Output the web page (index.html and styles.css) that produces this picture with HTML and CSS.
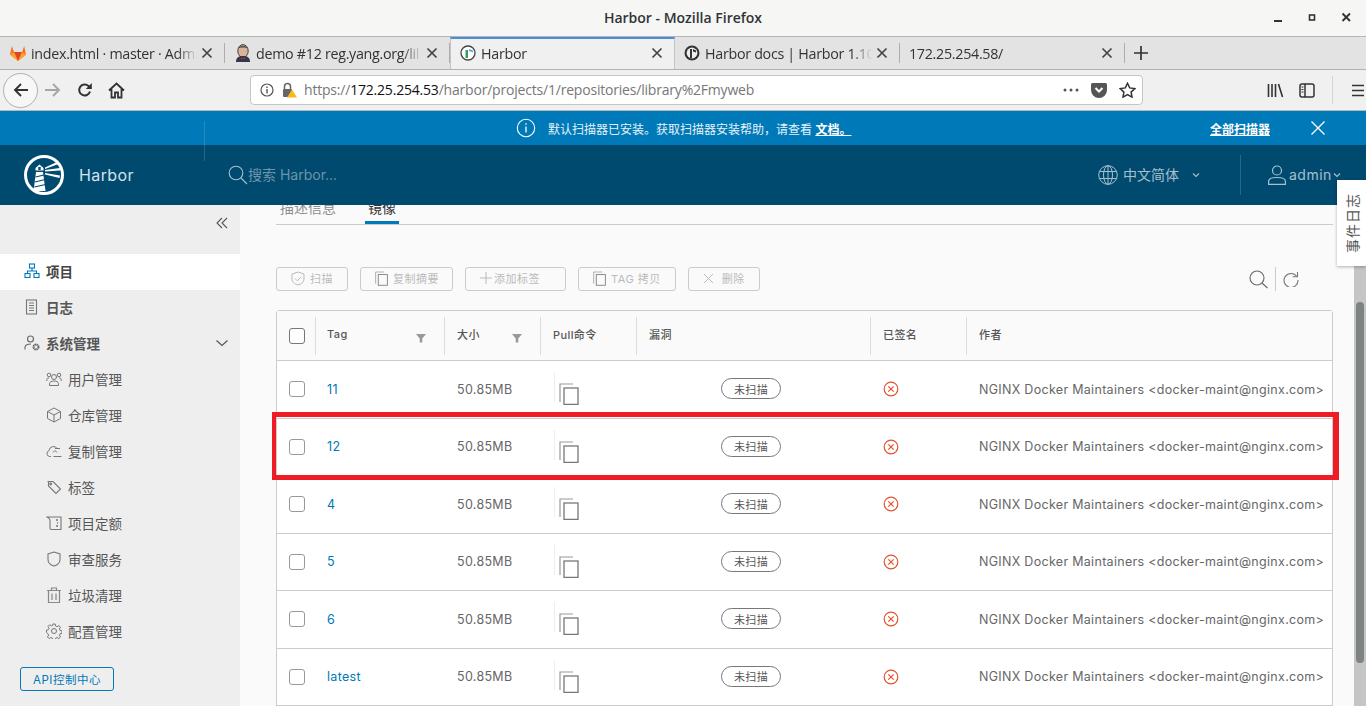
FILE: index.html
```html
<!DOCTYPE html>
<html lang="en">
<head>
    <meta charset="UTF-8">
    <title>Harbor - Mozilla Firefox</title>
    <link rel="stylesheet" href="styles.css">
</head>
<body>

<svg class="sprites" width="0" height="0">
    <symbol id="i-copy" viewBox="0 0 20 22">
        <path d="M1 19V1h13" fill="none" stroke="#9a9a9a" stroke-width="1.2"/>
        <rect x="5" y="5" width="14" height="16.4" fill="none" stroke="#777" stroke-width="1.3"/>
    </symbol>
    <symbol id="i-fail" viewBox="0 0 16 16">
        <circle cx="8" cy="8" r="6.8" fill="none" stroke="#e1532f" stroke-width="1.2"/>
        <path d="M5.3 5.3l5.4 5.4M10.7 5.3l-5.4 5.4" stroke="#e1532f" stroke-width="1.2"/>
    </symbol>
    <symbol id="i-funnel" viewBox="0 0 10 10">
        <path d="M0 1h10L6.3 5.4V9.5H3.7V5.4z" fill="#999"/>
    </symbol>
    <symbol id="i-close" viewBox="0 0 12 12">
        <path d="M1.5 1.5l9 9M10.5 1.5l-9 9" stroke="currentColor" stroke-width="1.7" fill="none"/>
    </symbol>
</svg>

<!-- Window title -->
<div class="titlebar">
    <span class="title-text">Harbor - Mozilla Firefox</span>
    <div class="win-controls">
        <svg width="12" height="12" viewBox="0 0 12 12"><rect x="1" y="8" width="8" height="2" fill="#333"/></svg>
        <svg width="12" height="12" viewBox="0 0 12 12"><rect x="2.5" y="3" width="5" height="5" fill="none" stroke="#333" stroke-width="1.6"/></svg>
        <svg width="12" height="12" viewBox="0 0 12 12"><path d="M1.5 1.5l7.5 7.5M9 1.5l-7.5 7.5" stroke="#333" stroke-width="1.9"/></svg>
    </div>
</div>

<!-- Tabs -->
<div class="tabbar">
    <div class="tab">
        <svg class="favicon" width="18" height="18" viewBox="0 0 18 18">
            <path d="M9 17L1 10.5 2.8 2 5 8h8l2.2-6L17 10.5z" fill="#fc6d26"/>
            <path d="M9 17L5 8h8z" fill="#e24329"/>
            <path d="M1 10.5L5 8l4 9zM17 10.5L13 8l-4 9z" fill="#fca326"/>
        </svg>
        <span class="tab-label">index.html · master · Adm</span>
        <svg class="tab-x"><use href="#i-close"/></svg>
    </div>
    <div class="tab">
        <svg class="favicon" width="18" height="18" viewBox="0 0 18 18">
            <ellipse cx="9" cy="7" rx="5.2" ry="6.4" fill="#d8b49a" stroke="#443" stroke-width="1"/>
            <path d="M4 4.5C5 .8 13 .8 14 4.5 11 3 7 3 4 4.5z" fill="#555"/>
            <path d="M2 18c0-5 3-6 7-6s7 1 7 6z" fill="#33384a"/>
            <path d="M7 13l2 1.4L11 13v2.6l-2-1.2-2 1.2z" fill="#b33"/>
        </svg>
        <span class="tab-label">demo #12 reg.yang.org/lil</span>
        <svg class="tab-x"><use href="#i-close"/></svg>
    </div>
    <div class="tab active">
        <svg class="favicon small" width="16" height="16" viewBox="0 0 16 16">
            <circle cx="8" cy="8" r="7" fill="#fff" stroke="#444" stroke-width="1.3"/>
            <path d="M5.5 5h2.5v8H5.5z" fill="#3c9a5f"/>
            <path d="M9 4l4 1.5v2L9 6z" fill="#59a9d8"/>
        </svg>
        <span class="tab-label">Harbor</span>
        <svg class="tab-x"><use href="#i-close"/></svg>
    </div>
    <div class="tab">
        <svg class="favicon small" width="16" height="16" viewBox="0 0 16 16">
            <circle cx="8" cy="8" r="7.5" fill="#333"/>
            <circle cx="8" cy="8" r="5.4" fill="#eee"/>
            <path d="M6 4h2v9H6zM9 4l3 1.5v2L9 6.5z" fill="#333"/>
        </svg>
        <span class="tab-label">Harbor docs | Harbor 1.10</span>
        <svg class="tab-x"><use href="#i-close"/></svg>
    </div>
    <div class="tab">
        <span class="tab-label">172.25.254.58/</span>
        <svg class="tab-x"><use href="#i-close"/></svg>
    </div>
    <svg class="tab-new" width="16" height="16" viewBox="0 0 16 16"><path d="M8 1v14M1 8h14" stroke="#333" stroke-width="1.7"/></svg>
</div>

<!-- Navigation toolbar -->
<div class="toolbar">
    <div class="back-btn">
        <svg width="18" height="18" viewBox="0 0 18 18"><path d="M16 9H3M9 3L3 9l6 6" fill="none" stroke="#333" stroke-width="1.9"/></svg>
    </div>
    <svg class="nav-icon" width="18" height="18" viewBox="0 0 18 18"><path d="M1 9h14M9 3l6 6-6 6" fill="none" stroke="#a6a6a6" stroke-width="1.9"/></svg>
    <svg class="nav-icon" width="16" height="16" viewBox="0 0 16 16"><path d="M13 9.5A5.5 5.5 0 1 1 11.5 4L14 5.6" fill="none" stroke="#333" stroke-width="2"/><path d="M14.8 1v6h-6z" fill="#333"/></svg>
    <svg class="nav-icon" width="17" height="17" viewBox="0 0 17 17"><path d="M1 8.5L8.5 1.5l7.5 7M3.5 7v8.5h3.5v-5h3v5h3.5V7" fill="none" stroke="#333" stroke-width="1.8"/></svg>

    <div class="urlbar">
        <svg class="url-info" width="14" height="14" viewBox="0 0 14 14"><circle cx="7" cy="7" r="6" fill="none" stroke="#555" stroke-width="1.2"/><path d="M7 6v4.5M7 3.4v1.5" stroke="#555" stroke-width="1.4"/></svg>
        <svg class="url-lock" width="16" height="16" viewBox="0 0 16 16">
            <path d="M3.5 7V4.5a3 3 0 0 1 6 0V7" fill="none" stroke="#666" stroke-width="1.5"/>
            <rect x="2" y="7" width="9" height="8" rx="1" fill="#666"/>
            <path d="M11 7.5L16 15.5H6z" fill="#fbb81a"/>
        </svg>
        <span class="url-text">https://<b>172.25.254.53</b>/harbor/projects/1/repositories/library%2Fmyweb</span>
        <div class="url-actions">
            <svg width="16" height="4" viewBox="0 0 16 4"><circle cx="2" cy="2" r="1.5" fill="#555"/><circle cx="8" cy="2" r="1.5" fill="#555"/><circle cx="14" cy="2" r="1.5" fill="#555"/></svg>
            <svg width="16" height="15" viewBox="0 0 16 15"><path d="M1.5 0h13A1.5 1.5 0 0 1 16 1.5V7A8 8 0 0 1 0 7V1.5A1.5 1.5 0 0 1 1.5 0z" fill="#555"/><path d="M4.5 5L8 8.5 11.5 5" fill="none" stroke="#fff" stroke-width="2"/></svg>
            <svg width="17" height="16" viewBox="0 0 17 16"><path d="M8.5 1.3l2.2 4.6 5 .7-3.6 3.5.9 5-4.5-2.4L4 15.1l.9-5L1.3 6.6l5-.7z" fill="none" stroke="#333" stroke-width="1.5"/></svg>
        </div>
    </div>

    <div class="tool-right">
        <svg width="17" height="15" viewBox="0 0 17 15"><path d="M1.5 1v13M5 1v13M8.5 1v13M11.5 1l4 13" stroke="#333" stroke-width="1.6" fill="none"/></svg>
        <svg width="16" height="15" viewBox="0 0 16 15"><rect x="1" y="1" width="14" height="13" rx="2" fill="none" stroke="#333" stroke-width="1.5"/><path d="M6 1v13" stroke="#333" stroke-width="1.5"/><path d="M2.5 4h2M2.5 6.5h2M2.5 9h2" stroke="#333"/></svg>
        <span class="tool-sep"></span>
        <svg width="14" height="13" viewBox="0 0 14 13"><path d="M1 1.5h12M1 6.5h12M1 11.5h12" stroke="#333" stroke-width="1.5"/></svg>
    </div>
</div>

<!-- Scanner notice -->
<div class="banner">
    <svg class="banner-icon" width="20" height="20" viewBox="0 0 20 20"><circle cx="10" cy="10" r="8.7" fill="none" stroke="#fff" stroke-width="1.1"/><path d="M10 8.5v6M10 5.2v1.6" stroke="#fff" stroke-width="1.3"/></svg>
    <span class="banner-text">默认扫描器已安装。获取扫描器安装帮助，请查看 <a class="banner-link">文档。</a></span>
    <a class="banner-all">全部扫描器</a>
    <svg class="banner-close" width="16" height="16" viewBox="0 0 16 16"><path d="M1.5 1.5l13 13M14.5 1.5l-13 13" stroke="#fff" stroke-width="1.3"/></svg>
</div>

<!-- Harbor header -->
<header class="app-header">
    <svg class="logo" width="40" height="40" viewBox="0 0 40 40">
        <circle cx="20" cy="20" r="18.5" fill="#004a70" stroke="#fff" stroke-width="3"/>
        <path d="M9.5 36l2.5-19h7l2.5 19z" fill="#fff"/>
        <path d="M11.5 15.5V13l4-3.500 4 3.500v2.500z" fill="#fff"/>
        <path d="M14.3 12h2.400v3h-2.400z" fill="#004a70"/>
        <path d="M11.5 22l8.500-2M11 27l10-2.500M10.5 32l11-2.500" stroke="#004a70" stroke-width="1.2"/>
        <path d="M21 12.5L33 7l1.500 2L21 14zM21 15l15-2v2.500L21 16.500zM21 18l15 2.500-.5 2.500L21 19.500z" fill="#fff"/>
    </svg>
    <span class="brand">Harbor</span>
    <div class="search">
        <svg width="20" height="20" viewBox="0 0 20 20"><circle cx="8" cy="8" r="6.8" fill="none" stroke="#a7c0cd" stroke-width="1.1"/><path d="M13 13l6 6" stroke="#a7c0cd" stroke-width="1.1"/></svg>
        <span>搜索 Harbor...</span>
    </div>
    <div class="lang">
        <svg width="20" height="20" viewBox="0 0 20 20" fill="none" stroke="#a7c0cd" stroke-width="1"><circle cx="10" cy="10" r="9.3"/><ellipse cx="10" cy="10" rx="4.5" ry="9.3"/><path d="M10 .7v18.6M1.5 6.5h17M1.5 13.5h17"/></svg>
        <span>中文简体</span>
        <svg class="caret" width="8" height="6" viewBox="0 0 8 6"><path d="M1 1.5l3 3 3-3" fill="none" stroke="#a7c0cd" stroke-width="1.1"/></svg>
    </div>
    <div class="user">
        <svg width="18" height="20" viewBox="0 0 18 20" fill="none" stroke="#a7c0cd" stroke-width="1.2"><circle cx="9" cy="5.5" r="4.5"/><path d="M.6 19.4v-3.200C.6 13.5 5 12.5 9 12.5s8.400 1 8.400 3.700v3.200z"/></svg>
        <span>admin</span>
        <svg class="caret" width="8" height="6" viewBox="0 0 8 6"><path d="M1 1.5l3 3 3-3" fill="none" stroke="#a7c0cd" stroke-width="1.1"/></svg>
    </div>
</header>

<div class="app-body">
    <!-- Left navigation -->
    <aside class="sidebar">
        <div class="collapse">
            <svg width="12" height="12" viewBox="0 0 12 12"><path d="M6 1L1 6l5 5M11 1L6 6l5 5" fill="none" stroke="#555" stroke-width="1.1"/></svg>
        </div>
        <a class="nav-item top active">
            <svg width="16" height="16" viewBox="0 0 16 16" fill="none" stroke="#0079b8" stroke-width="1.1"><rect x="5.5" y="1" width="5" height="4"/><rect x="1" y="10.5" width="5" height="4"/><rect x="10" y="10.5" width="5" height="4"/><path d="M8 5v3M3.5 10.5V8h9v2.500"/></svg>
            项目
        </a>
        <a class="nav-item top">
            <svg width="16" height="16" viewBox="0 0 16 16" fill="none" stroke="#777" stroke-width="1.1"><rect x="2.5" y="1" width="10" height="14"/><path d="M5 4h5M5 6.5h5M5 9h5M5 11.5h5"/></svg>
            日志
        </a>
        <a class="nav-item top">
            <svg width="16" height="16" viewBox="0 0 16 16" fill="none" stroke="#666" stroke-width="1.1"><circle cx="6.5" cy="4" r="3"/><path d="M1 14.5v-2C1 10 4 9 7 9"/><circle cx="12" cy="12" r="2.5" stroke-width="2" stroke-dasharray="1.5 .5"/></svg>
            系统管理
            <svg class="nav-chevron" width="14" height="8" viewBox="0 0 14 8"><path d="M1.5 1.5L7 6.5l5.500-5" fill="none" stroke="#555" stroke-width="1.2"/></svg>
        </a>
        <a class="nav-item sub">
            <svg width="16" height="16" viewBox="0 0 16 16" fill="none" stroke="#777" stroke-width="1"><circle cx="8" cy="6" r="2.5"/><path d="M3.5 14.5v-2c0-1.500 2-2.500 4.500-2.500s4.500 1 4.500 2.500v2z"/><circle cx="3" cy="4" r="1.8"/><circle cx="13" cy="4" r="1.8"/><path d="M.8 10V8.500C.8 7.500 1.500 7 3 7M15.200 10V8.500C15.200 7.500 14.500 7 13 7"/></svg>
            用户管理
        </a>
        <a class="nav-item sub">
            <svg width="16" height="16" viewBox="0 0 16 16" fill="none" stroke="#777" stroke-width="1"><path d="M8 1l6.500 3.500v7L8 15l-6.500-3.500v-7zM1.500 4.500L8 8l6.500-3.500M8 8v7"/></svg>
            仓库管理
        </a>
        <a class="nav-item sub">
            <svg width="16" height="16" viewBox="0 0 16 16" fill="none" stroke="#777" stroke-width="1"><path d="M5 13.500H3.500a3 3 0 0 1-.5-5.800 4.500 4.500 0 0 1 8.500-1.700M15.500 13.500h-8M9 5.500h5M7 9.500l2-2 2 2"/></svg>
            复制管理
        </a>
        <a class="nav-item sub">
            <svg width="16" height="16" viewBox="0 0 16 16" fill="none" stroke="#777" stroke-width="1.1"><path d="M1.500 2.500h5.500l7.500 7.500-4.500 4.500L2.500 7V2.500z"/><circle cx="4.7" cy="5" r=".9"/></svg>
            标签
        </a>
        <a class="nav-item sub">
            <svg width="16" height="16" viewBox="0 0 16 16" fill="none" stroke="#777" stroke-width="1.1"><path d="M1 2h14v12.500H5.500c-1 0-1.500-.5-1.500-1.500V5C4 3.500 2.500 3 1 2z"/><path d="M10 5h2M11 8h1M10 11h2" stroke-width="1.3"/></svg>
            项目定额
        </a>
        <a class="nav-item sub">
            <svg width="16" height="16" viewBox="0 0 16 16" fill="none" stroke="#777" stroke-width="1.1"><path d="M8 1l6 2v5.500c0 3-2.500 5.500-6 6.500-3.500-1-6-3.500-6-6.500V3z"/></svg>
            审查服务
        </a>
        <a class="nav-item sub">
            <svg width="16" height="16" viewBox="0 0 16 16" fill="none" stroke="#888" stroke-width="1.2"><path d="M1 3.500h14M5.500 3.500V1h5v2.500M2.500 3.500v12h11v-12M6 6.500v6.500M10 6.500v6.500"/></svg>
            垃圾清理
        </a>
        <a class="nav-item sub">
            <svg width="16" height="16" viewBox="0 0 16 16" fill="none" stroke="#777" stroke-width="1"><circle cx="8" cy="8" r="2.5"/><path d="M6.800 1h2.400l.4 2 1.500.7 1.800-1.100 1.600 1.600-1.100 1.800.7 1.500 1.900.4v2.400l-1.900.4-.7 1.500 1.100 1.800-1.600 1.600-1.800-1.100-1.500.7-.4 1.800H6.800l-.4-1.800-1.500-.7-1.800 1.100-1.600-1.600 1.100-1.800-.7-1.500L.5 9.500V7.100l1.900-.4.7-1.500-1.100-1.800 1.600-1.600 1.800 1.100 1.500-.7z"/></svg>
            配置管理
        </a>
        <a class="api-btn">API控制中心</a>
    </aside>

    <!-- Repository tags -->
    <main class="content">
        <div class="page">
            <nav class="subnav">
                <span class="subnav-item">描述信息</span>
                <span class="subnav-item current">镜像</span>
            </nav>

            <div class="actions">
                <button class="act">
                    <svg width="14" height="15" viewBox="0 0 14 15" fill="none" stroke="#bbb" stroke-width="1"><path d="M7 1l6 2v5c0 3-2.500 5-6 6-3.500-1-6-3-6-6V3z"/><path d="M4 7.500l2.300 2.300L10 6"/></svg>
                    扫描
                </button>
                <button class="act narrow">
                    <svg class="act-copy"><use href="#i-copy"/></svg>
                    复制摘要
                </button>
                <button class="act add">
                    <svg width="12" height="12" viewBox="0 0 12 12"><path d="M6 0v12M0 6h12" stroke="#bbb" stroke-width="1"/></svg>
                    添加标签
                </button>
                <button class="act">
                    <svg class="act-copy"><use href="#i-copy"/></svg>
                    TAG 拷贝
                </button>
                <button class="act remove">
                    <svg width="11" height="11" viewBox="0 0 11 11"><path d="M1 1l9 9M10 1l-9 9" stroke="#bbb"/></svg>
                    删除
                </button>
                <div class="act-tools">
                    <svg width="19" height="19" viewBox="0 0 19 19" fill="none" stroke="#666" stroke-width="1.1"><circle cx="8" cy="8" r="7"/><path d="M13 13l5.500 5"/></svg>
                    <span class="act-sep"></span>
                    <svg width="16" height="16" viewBox="0 0 16 16" fill="none" stroke="#777" stroke-width="1.1"><path d="M13.800 5.500A7 7 0 1 0 15 9"/><path d="M14.500 1v4.800H9.700"/></svg>
                </div>
            </div>

            <div class="grid-table">
                <div class="row head">
                    <div class="cell check"><span class="box dark"></span></div>
                    <div class="cell">Tag<svg class="funnel"><use href="#i-funnel"/></svg></div>
                    <div class="cell">大小<svg class="funnel"><use href="#i-funnel"/></svg></div>
                    <div class="cell">Pull命令</div>
                    <div class="cell">漏洞</div>
                    <div class="cell">已签名</div>
                    <div class="cell">作者</div>
                </div>

                <div class="row">
                    <div class="cell check"><span class="box"></span></div>
                    <div class="cell"><a class="tag-link">11</a></div>
                    <div class="cell">50.85MB</div>
                    <div class="cell pull"><svg class="copy-icon"><use href="#i-copy"/></svg></div>
                    <div class="cell vuln"><span class="chip">未扫描</span></div>
                    <div class="cell"><svg class="fail"><use href="#i-fail"/></svg></div>
                    <div class="cell">NGINX Docker Maintainers &lt;docker-maint@nginx.com&gt;</div>
                </div>
                <div class="row">
                    <div class="cell check"><span class="box"></span></div>
                    <div class="cell"><a class="tag-link">12</a></div>
                    <div class="cell">50.85MB</div>
                    <div class="cell pull"><svg class="copy-icon"><use href="#i-copy"/></svg></div>
                    <div class="cell vuln"><span class="chip">未扫描</span></div>
                    <div class="cell"><svg class="fail"><use href="#i-fail"/></svg></div>
                    <div class="cell">NGINX Docker Maintainers &lt;docker-maint@nginx.com&gt;</div>
                </div>
                <div class="row">
                    <div class="cell check"><span class="box"></span></div>
                    <div class="cell"><a class="tag-link">4</a></div>
                    <div class="cell">50.85MB</div>
                    <div class="cell pull"><svg class="copy-icon"><use href="#i-copy"/></svg></div>
                    <div class="cell vuln"><span class="chip">未扫描</span></div>
                    <div class="cell"><svg class="fail"><use href="#i-fail"/></svg></div>
                    <div class="cell">NGINX Docker Maintainers &lt;docker-maint@nginx.com&gt;</div>
                </div>
                <div class="row">
                    <div class="cell check"><span class="box"></span></div>
                    <div class="cell"><a class="tag-link">5</a></div>
                    <div class="cell">50.85MB</div>
                    <div class="cell pull"><svg class="copy-icon"><use href="#i-copy"/></svg></div>
                    <div class="cell vuln"><span class="chip">未扫描</span></div>
                    <div class="cell"><svg class="fail"><use href="#i-fail"/></svg></div>
                    <div class="cell">NGINX Docker Maintainers &lt;docker-maint@nginx.com&gt;</div>
                </div>
                <div class="row">
                    <div class="cell check"><span class="box"></span></div>
                    <div class="cell"><a class="tag-link">6</a></div>
                    <div class="cell">50.85MB</div>
                    <div class="cell pull"><svg class="copy-icon"><use href="#i-copy"/></svg></div>
                    <div class="cell vuln"><span class="chip">未扫描</span></div>
                    <div class="cell"><svg class="fail"><use href="#i-fail"/></svg></div>
                    <div class="cell">NGINX Docker Maintainers &lt;docker-maint@nginx.com&gt;</div>
                </div>
                <div class="row">
                    <div class="cell check"><span class="box"></span></div>
                    <div class="cell"><a class="tag-link">latest</a></div>
                    <div class="cell">50.85MB</div>
                    <div class="cell pull"><svg class="copy-icon"><use href="#i-copy"/></svg></div>
                    <div class="cell vuln"><span class="chip">未扫描</span></div>
                    <div class="cell"><svg class="fail"><use href="#i-fail"/></svg></div>
                    <div class="cell">NGINX Docker Maintainers &lt;docker-maint@nginx.com&gt;</div>
                </div>
            </div>
        </div>
        <div class="scrollbar"><div class="scroll-thumb"></div></div>
    </main>
</div>

<!-- Things drawn over the page -->
<span class="header-rule"></span>
<div class="event-tab"><span>事件日志</span></div>
<div class="red-box"></div>

</body>
</html>
```

FILE: styles.css
```css
* {
    box-sizing: border-box;
    margin: 0;
    padding: 0;
}

body {
    width: 1366px;
    height: 706px;
    overflow: hidden;
    display: flex;
    flex-direction: column;
    position: relative;
    font-family: Inter, "Noto Sans CJK SC", sans-serif;
    background-color: #fafafa;
    color: #565656;
}

.sprites {
    position: absolute;
}

/* Browser chrome */
.titlebar {
    height: 37px;
    flex: none;
    display: flex;
    align-items: center;
    justify-content: center;
    padding-bottom: 2px;
    position: relative;
    background-color: #f6f6f5;
    border-bottom: 1px solid #b5b5b3;
    font-family: "Open Sans", sans-serif;
}

.title-text {
    font-size: 14px;
    font-weight: 600;
    color: #2e3436;
}

.win-controls {
    position: absolute;
    right: 13px;
    top: 12px;
    display: flex;
    gap: 22px;
}

.tabbar {
    height: 33px;
    flex: none;
    display: flex;
    align-items: center;
    background-color: #e3e3e3;
    border-bottom: 1px solid #b1b1b1;
    font-family: "Open Sans", sans-serif;
}

.tab {
    width: 225px;
    height: 32px;
    flex: none;
    display: flex;
    align-items: center;
    padding: 0 12px 0 9px;
    position: relative;
    font-size: 14.3px;
    color: #333;
}

.tab::after {
    content: "";
    position: absolute;
    right: 0;
    top: 6px;
    height: 20px;
    width: 1px;
    background-color: #adadad;
}

.tab.active {
    background-color: #f0f0f0;
    border-top: 2px solid #4a90d9;
    border-left: 1px solid #c4c4c4;
    border-right: 1px solid #c4c4c4;
    padding: 0 11px 2px 9px;
}

.tab.active::after {
    display: none;
}

.favicon {
    flex: none;
    margin-right: 4px;
}

.favicon.small {
    margin-right: 5px;
}

.tab-label {
    flex: 1;
    overflow: hidden;
    white-space: nowrap;
    letter-spacing: -0.3px;
    margin-right: 4px;
    -webkit-mask-image: linear-gradient(to right, #000 88%, transparent);
    mask-image: linear-gradient(to right, #000 88%, transparent);
}

.tab-x {
    flex: none;
    width: 12px;
    height: 12px;
    color: #444;
}

.tab-new {
    margin-left: 8px;
}

.toolbar {
    height: 41px;
    flex: none;
    display: flex;
    align-items: center;
    padding-left: 3px;
    background-color: #f0f0f0;
    border-bottom: 1px solid #b8b8b8;
    font-family: "Open Sans", sans-serif;
}

.back-btn {
    width: 35px;
    height: 35px;
    flex: none;
    display: flex;
    align-items: center;
    justify-content: center;
    border: 1px solid #b0b0b0;
    border-radius: 50%;
    background-color: #f7f7f7;
    margin-right: 6px;
}

.nav-icon {
    flex: none;
    margin-right: 15px;
}

.nav-icon:last-of-type {
    margin-right: 0;
}

.urlbar {
    width: 893px;
    height: 30px;
    flex: none;
    display: flex;
    align-items: center;
    margin-left: 125px;
    padding: 0 6px 0 9px;
    background-color: #fff;
    border: 1px solid #c6c6c6;
    border-radius: 4px;
    font-size: 14px;
    color: #777;
}

.url-info {
    flex: none;
    margin-right: 7px;
}

.url-lock {
    flex: none;
    margin-right: 7px;
}

.url-text {
    flex: 1;
    white-space: nowrap;
    letter-spacing: -0.2px;
    margin-top: -2px;
}

.url-text b {
    font-weight: 400;
    color: #111;
}

.url-actions {
    display: flex;
    align-items: center;
    gap: 12px;
}

.tool-right {
    display: flex;
    align-items: center;
    margin-left: 124px;
    gap: 15px;
}

.tool-sep {
    width: 1px;
    height: 28px;
    background-color: #d4d4d4;
    margin: 0 3px 0 2px;
}

/* Harbor top */
.banner {
    height: 34px;
    flex: none;
    display: flex;
    align-items: center;
    padding-left: 516px;
    position: relative;
    background-color: #0079b8;
    color: #fff;
    font-size: 12px;
}

.banner-icon {
    flex: none;
    margin-right: 12px;
}

.banner-text {
    color: #e6f2f8;
    white-space: nowrap;
}

.banner-link,
.banner-all {
    font-weight: 700;
    color: #fff;
    text-decoration: underline;
}

.banner-all {
    position: absolute;
    left: 1210px;
}

.banner-close {
    position: absolute;
    left: 1310px;
}

.app-header {
    height: 60px;
    flex: none;
    display: flex;
    align-items: center;
    padding-left: 24px;
    background-color: #004a70;
    color: #a7c0cd;
}

.logo {
    flex: none;
}

.brand {
    width: 149px;
    margin-left: 15px;
    font-size: 16px;
    color: #d4e2ea;
    letter-spacing: 0.4px;
}

.search {
    width: 870px;
    display: flex;
    align-items: center;
    font-size: 14px;
    color: #6d94a8;
}

.search span {
    margin-top: -2px;
}

.lang,
.user {
    display: flex;
    align-items: center;
    font-size: 14px;
}

.lang span,
.user span {
    margin-top: -2px;
}

.lang {
    width: 143px;
    gap: 5px;
    height: 40px;
    border-right: 1px solid #2a6685;
}

.lang .caret {
    margin-left: 8px;
}

.user {
    margin-left: 27px;
    gap: 3px;
    letter-spacing: 0.5px;
}

.user .caret {
    margin-left: -2px;
}

.header-rule {
    position: absolute;
    left: 204px;
    top: 121px;
    width: 1px;
    height: 40px;
    background-color: rgba(255, 255, 255, 0.15);
}

/* Left navigation */
.app-body {
    flex: 1;
    min-height: 0;
    display: flex;
}

.sidebar {
    width: 240px;
    flex: none;
    background-color: #eee;
    display: flex;
    flex-direction: column;
}

.collapse {
    height: 49px;
    flex: none;
    display: flex;
    justify-content: flex-end;
    padding: 12px 12px 0 0;
}

.nav-item {
    height: 36px;
    flex: none;
    display: flex;
    align-items: center;
    gap: 6px;
    padding-bottom: 2px;
    font-size: 13.5px;
    color: #565656;
    position: relative;
}

.nav-item.top {
    padding-left: 24px;
    font-weight: 700;
}

.nav-item.sub {
    padding-left: 46px;
}

.nav-item.active {
    background-color: #fff;
    color: #444;
}

.nav-chevron {
    position: absolute;
    right: 11px;
    top: 13px;
}

.api-btn {
    width: 94px;
    height: 24px;
    margin: 17px 0 0 20px;
    display: flex;
    align-items: center;
    justify-content: center;
    padding-bottom: 1px;
    border: 1px solid #0079b8;
    border-radius: 3px;
    color: #0079b8;
    font-size: 11.5px;
    letter-spacing: 0.5px;
}

/* Main content */
.content {
    flex: 1;
    min-width: 0;
    display: flex;
    overflow: hidden;
}

.page {
    flex: 1;
    min-width: 0;
    padding: 0 21px 0 36px;
}

.subnav {
    height: 31px;
    margin-top: -11px;
    display: flex;
    align-items: flex-end;
    border-bottom: 1px solid #ccc;
    font-size: 14px;
}

.subnav-item {
    height: 28px;
    margin-left: 4px;
    margin-right: 29px;
    line-height: 24px;
    color: #8c8c8c;
}

.subnav-item.current {
    margin-left: 0;
    padding: 0 3px;
    color: #333;
    border-bottom: 3px solid #0079b8;
}

.actions {
    height: 85px;
    display: flex;
    align-items: flex-start;
    gap: 12px;
    padding-top: 42px;
}

.act {
    height: 24px;
    display: flex;
    align-items: center;
    gap: 5px;
    padding: 0 14px 2px;
    background: none;
    border: 1px solid #ccc;
    border-radius: 3px;
    color: #bbb;
    font-family: inherit;
    font-size: 11px;
    letter-spacing: 0.5px;
}

.act.narrow {
    padding-right: 13px;
}

.act.add {
    gap: 2px;
    padding-right: 25px;
}

.act.remove {
    gap: 8px;
}

.act-copy {
    width: 13px;
    height: 15px;
}

.act-tools {
    margin-left: auto;
    margin-right: 34px;
    display: flex;
    align-items: center;
    gap: 7px;
}

.act-sep {
    width: 1px;
    height: 24px;
    background-color: #ccc;
}

.grid-table {
    background-color: #fff;
    border: 1px solid #ccc;
    border-radius: 3px 3px 0 0;
}

.row {
    height: 57.5px;
    display: grid;
    grid-template-columns: 39px 129px 96px 96px 234px 96px 1fr;
    align-items: center;
    border-bottom: 1px solid #ccc;
    font-size: 12.5px;
    color: #666;
}

.cell {
    display: flex;
    align-items: center;
    padding-left: 12px;
    white-space: nowrap;
    min-width: 0;
    letter-spacing: 0.3px;
}

.cell:nth-child(2) {
    padding-left: 11px;
}

.row.head {
    height: 50px;
    background-color: #fafafa;
    font-size: 11px;
    font-weight: 500;
    color: #565656;
}

.row.head .cell {
    height: 38px;
    border-right: 1px solid #ddd;
    padding-bottom: 4px;
    letter-spacing: 0.4px;
    position: relative;
}

.row.head .cell:last-child {
    border-right: none;
}

.row.head .check {
    padding-bottom: 0;
}

.box {
    width: 16px;
    height: 16px;
    border: 1px solid #999;
    border-radius: 3px;
    background-color: #fff;
}

.box.dark {
    border-color: #777;
}

.funnel {
    width: 10px;
    height: 10px;
    position: absolute;
    right: 18px;
    top: 16px;
}

.tag-link {
    color: #0079b8;
}

.pull {
    padding-left: 13px;
}

.copy-icon {
    width: 20px;
    height: 22px;
    margin: 10px 0 0 5px;
}

.pull::before {
    content: "";
    width: 1px;
    height: 30px;
    background-color: #eee;
    position: absolute;
    margin-top: -4px;
}

.vuln {
    padding-left: 84px;
}

.chip {
    width: 60px;
    height: 21px;
    margin-top: -1px;
    display: flex;
    align-items: center;
    justify-content: center;
    border: 1px solid #777;
    border-radius: 11px;
    font-size: 11px;
    color: #565656;
}

.fail {
    width: 16px;
    height: 16px;
}

.scrollbar {
    width: 12px;
    flex: none;
    padding: 97px 2px 0;
    background-color: #c4c6c4;
}

.scroll-thumb {
    height: 361px;
    border-radius: 4px;
    background-color: #7e8381;
}

/* Overlays */
.event-tab {
    position: absolute;
    left: 1337px;
    top: 180px;
    width: 29px;
    height: 86px;
    display: flex;
    align-items: center;
    justify-content: center;
    background-color: #fff;
    box-shadow: 0 1px 3px rgba(0, 0, 0, 0.3);
    font-size: 14px;
    color: #565656;
}

.event-tab span {
    white-space: nowrap;
    transform: rotate(-90deg);
    letter-spacing: 1px;
}

.red-box {
    position: absolute;
    left: 272px;
    top: 412px;
    width: 1067px;
    height: 68px;
    border-style: solid;
    border-color: #ee1c25;
    border-width: 5px 6px 5px 4px;
    pointer-events: none;
}
```
